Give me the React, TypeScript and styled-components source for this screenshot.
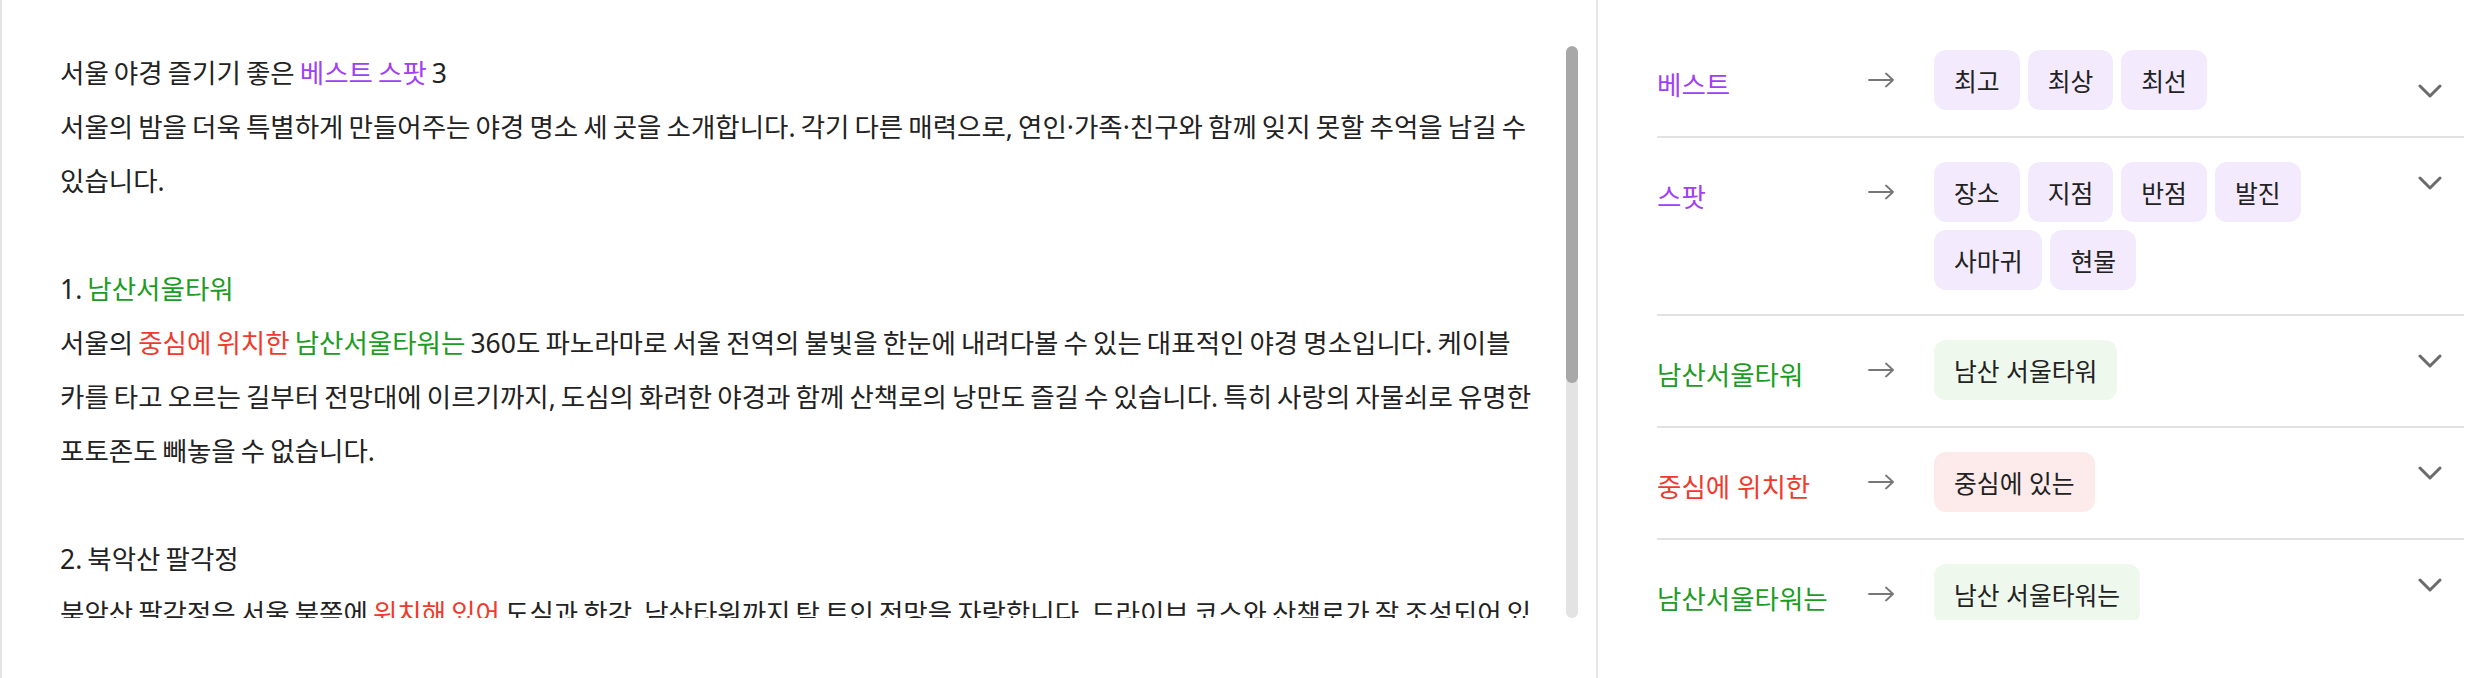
import React from "react";
import styled, { createGlobalStyle, css } from "styled-components";

const GlobalStyle = createGlobalStyle`
  html, body {
    margin: 0;
    padding: 0;
    background: #ffffff;
  }
  body {
    font-family: "Noto Sans", "Noto Sans CJK KR", sans-serif;
    color: #222222;
  }
`;

type Tone = "purple" | "green" | "red";

const toneText: Record<Tone, string> = {
  purple: "#a03ff7",
  green: "#1d9c24",
  red: "#ef3a2d",
};

const toneBg: Record<Tone, string> = {
  purple: "#f3ebfd",
  green: "#eef8ec",
  red: "#fdeaea",
};

const Frame = styled.div`
  display: flex;
  height: 678px;
  border-left: 2px solid #e3e3e3;
  box-sizing: border-box;
  background: #ffffff;
  overflow: hidden;
`;

const EditorPane = styled.section`
  flex: none;
  width: 1594px;
  box-sizing: border-box;
  padding: 46px 18px 0 58px;
`;

const EditorBody = styled.div`
  display: flex;
  height: 572px;
`;

const Viewport = styled.div`
  flex: 1;
  min-width: 0;
  overflow: hidden;
  box-sizing: border-box;
  padding-right: 33.5px;
  font-size: 26.5px;
  line-height: 54px;
  word-spacing: -1.8px;
  color: #222222;
`;

const ScrollTrack = styled.div`
  flex: none;
  width: 12px;
  border-radius: 6px;
  background: #e3e3e3;
  overflow: hidden;
`;

const ScrollThumb = styled.div<{ $size: number }>`
  height: ${(p) => p.$size}px;
  border-radius: 6px;
  background: #a8a8a8;
`;

const Line = styled.p`
  margin: 0;
`;

const Section = styled.div`
  margin-top: 54px;
`;

const Mark = styled.span<{ $tone: Tone }>`
  color: ${(p) => toneText[p.$tone]};
`;

const ReviewPane = styled.aside`
  flex: 1;
  border-left: 2px solid #e6e6e6;
  box-sizing: border-box;
  padding: 26px 24px 0 59px;
`;

const ReviewList = styled.div`
  height: 594px;
  overflow: hidden;
`;

const Row = styled.div`
  display: flex;
  align-items: flex-start;
  padding: 24px 0;
  border-bottom: 2px solid #e2e2e2;
`;

const Label = styled.div<{ $tone: Tone }>`
  flex: none;
  width: 211px;
  padding-top: 8px;
  font-size: 26.5px;
  line-height: 54px;
  color: ${(p) => toneText[p.$tone]};
  white-space: nowrap;
`;

const ArrowBox = styled.div`
  flex: none;
  width: 26px;
  height: 16px;
  margin-top: 22px;
  margin-right: 40px;
  color: #777777;
  display: flex;
`;

const Chips = styled.div`
  flex: 1;
  display: flex;
  flex-wrap: wrap;
  gap: 8px;
`;

const Chip = styled.span<{ $tone: Tone }>`
  display: inline-flex;
  align-items: center;
  height: 60px;
  padding: 0 20px;
  box-sizing: border-box;
  border-radius: 12px;
  background: ${(p) => toneBg[p.$tone]};
  color: #222222;
  font-size: 24.8px;
  white-space: nowrap;
`;

const Toggle = styled.button<{ $lowered?: boolean }>`
  flex: none;
  width: 24px;
  height: 14px;
  padding: 0;
  border: 0;
  background: transparent;
  margin-left: 40px;
  margin-right: 22px;
  color: #6b6b6b;
  display: flex;
  cursor: pointer;
  ${(p) =>
    p.$lowered
      ? css`
          margin-top: 34px;
        `
      : css`
          margin-top: 14px;
        `}
`;

const Arrow = () => (
  <svg width="26" height="16" viewBox="0 0 26 16" fill="none">
    <path
      d="M1 8H25M18 1.5L25 8L18 14.5"
      stroke="currentColor"
      strokeWidth="1.8"
      strokeLinecap="round"
      strokeLinejoin="round"
    />
  </svg>
);

const Chevron = () => (
  <svg width="24" height="14" viewBox="0 0 24 14" fill="none">
    <path
      d="M2 2L12 12L22 2"
      stroke="currentColor"
      strokeWidth="3"
      strokeLinecap="round"
      strokeLinejoin="round"
    />
  </svg>
);

type Suggestion = { word: string; tone: Tone; options: string[] };

const suggestions: Suggestion[] = [
  { word: "베스트", tone: "purple", options: ["최고", "최상", "최선"] },
  {
    word: "스팟",
    tone: "purple",
    options: ["장소", "지점", "반점", "발진", "사마귀", "현물"],
  },
  { word: "남산서울타워", tone: "green", options: ["남산 서울타워"] },
  { word: "중심에 위치한", tone: "red", options: ["중심에 있는"] },
  { word: "남산서울타워는", tone: "green", options: ["남산 서울타워는"] },
  { word: "위치해 있어", tone: "red", options: ["자리해 있어"] },
];

export default function App() {
  return (
    <>
      <GlobalStyle />
      <Frame>
        <EditorPane>
          <EditorBody>
            <Viewport>
              <Line>
                서울 야경 즐기기 좋은 <Mark $tone="purple">베스트</Mark>{" "}
                <Mark $tone="purple">스팟</Mark> 3
              </Line>
              <Line>
                서울의 밤을 더욱 특별하게 만들어주는 야경 명소 세 곳을
                소개합니다. 각기 다른 매력으로, 연인·가족·친구와 함께 잊지
                못할 추억을 남길 수 있습니다.
              </Line>
              <Section>
                <Line>
                  1. <Mark $tone="green">남산서울타워</Mark>
                </Line>
                <Line>
                  서울의 <Mark $tone="red">중심에 위치한</Mark>{" "}
                  <Mark $tone="green">남산서울타워는</Mark> 360도 파노라마로
                  서울 전역의 불빛을 한눈에 내려다볼 수 있는 대표적인 야경
                  명소입니다. 케이블카를 타고 오르는 길부터 전망대에
                  이르기까지, 도심의 화려한 야경과 함께 산책로의 낭만도 즐길 수
                  있습니다. 특히 사랑의 자물쇠로 유명한 포토존도 빼놓을 수
                  없습니다.
                </Line>
              </Section>
              <Section>
                <Line>2. 북악산 팔각정</Line>
                <Line>
                  북악산 팔각정은 서울 북쪽에{" "}
                  <Mark $tone="red">위치해 있어</Mark> 도심과 한강, 남산타워까지
                  탁 트인 전망을 자랑합니다. 드라이브 코스와 산책로가 잘
                  조성되어 있어 조용하고 여유로운 분위기 속에서 야경을 감상하기
                  좋으며, 해 질 무렵 노을과 함께 서서히 불이 켜지는 도시의
                  모습은 잊지 못할 장관을 선사합니다.
                </Line>
              </Section>
              <Section>
                <Line>3. 낙산공원</Line>
                <Line>
                  낙산공원은 한양도성 성곽길을 따라 걸으며 서울의 야경을 감상할
                  수 있는 곳입니다. 은은한 조명이 비추는 성곽과 도심의 불빛이
                  어우러져 낭만적인 분위기를 자아내며, 이화벽화마을과 가까워
                  함께 둘러보기에도 좋습니다. 접근성이 좋아 퇴근 후 가볍게
                  산책하기에도 안성맞춤입니다.
                </Line>
              </Section>
            </Viewport>
            <ScrollTrack>
              <ScrollThumb $size={337} />
            </ScrollTrack>
          </EditorBody>
        </EditorPane>
        <ReviewPane>
          <ReviewList>
            {suggestions.map((s, i) => (
              <Row key={s.word}>
                <Label $tone={s.tone}>{s.word}</Label>
                <ArrowBox>
                  <Arrow />
                </ArrowBox>
                <Chips>
                  {s.options.map((o) => (
                    <Chip key={o} $tone={s.tone}>
                      {o}
                    </Chip>
                  ))}
                </Chips>
                <Toggle $lowered={i === 0} aria-label="펼치기">
                  <Chevron />
                </Toggle>
              </Row>
            ))}
          </ReviewList>
        </ReviewPane>
      </Frame>
    </>
  );
}
